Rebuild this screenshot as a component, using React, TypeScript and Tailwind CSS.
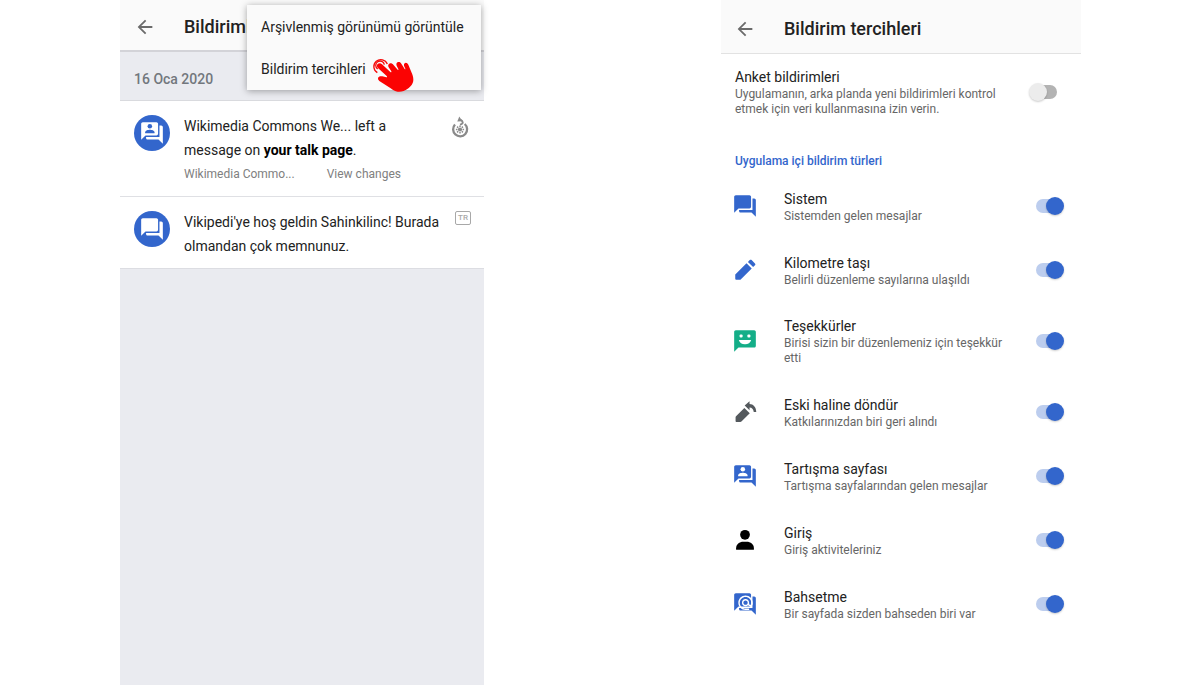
import React, { useState } from "react";
import { MdAlternateEmail, MdArrowBack } from "react-icons/md";

type IconProps = { className?: string };

// Two stacked speech bubbles, children are drawn on the front one
const BubblesIcon: React.FC<IconProps & { children?: React.ReactNode }> = ({ className, children }) => (
    <svg viewBox="0 0 24 24" className={className} fill="currentColor" aria-hidden="true">
        <path d="M3.500 2h12.600c.8 0 1.500.7 1.500 1.500v9.200c0 .8-.7 1.500-1.500 1.500H6L2 18.200V3.500C2 2.700 2.700 2 3.500 2z" />
        <path d="M18.900 5h1.600c.8 0 1.500.7 1.500 1.500V22l-4-4H8c-.8 0-1.500-.7-1.500-1.500v-.9h12.400z" />
        {children}
    </svg>
);

const TalkIcon: React.FC<IconProps & { hole: string }> = ({ className, hole }) => (
    <BubblesIcon className={className}>
        <circle cx="10" cy="5.800" r="2.100" fill={hole} />
        <path d="M5.700 12.200v-.8c0-1.600 2.800-2.300 4.300-2.300s4.300.7 4.300 2.300v.8z" fill={hole} />
    </BubblesIcon>
);

const MentionIcon: React.FC<IconProps> = ({ className }) => (
    <BubblesIcon className={className}>
        <MdAlternateEmail x="4.500" y="2.800" width="10.500" height="10.500" color="#fff" />
    </BubblesIcon>
);

const PencilIcon: React.FC<IconProps> = ({ className }) => (
    <svg viewBox="0 0 24 24" className={className} fill="currentColor" aria-hidden="true">
        <path d="M3 16.200 13.400 5.800l4.800 4.800L7.800 21H3.900a.9.9 0 0 1-.9-.9z" />
        <path d="m14.700 4.500 1.700-1.700c.5-.5 1.200-.5 1.700 0l3.100 3.100c.5.500.5 1.200 0 1.700l-1.700 1.700z" />
    </svg>
);

const ThanksIcon: React.FC<IconProps> = ({ className }) => (
    <svg viewBox="0 0 24 24" className={className} aria-hidden="true">
        <path fill="currentColor" d="M20.500 2h-17C2.700 2 2 2.700 2 3.500V22l4-4h14.500c.8 0 1.500-.7 1.500-1.500v-13c0-.8-.7-1.500-1.500-1.500z" />
        <rect x="7" y="6" width="2.800" height="2.800" rx="1" fill="#fff" />
        <rect x="14.200" y="6" width="2.800" height="2.800" rx="1" fill="#fff" />
        <path fill="#fff" d="M6.300 11h11.400c-.6 2.400-2.800 4-5.700 4s-5.100-1.600-5.700-4z" />
    </svg>
);

const RevertIcon: React.FC<IconProps> = ({ className }) => (
    <svg viewBox="0 0 24 24" className={className} fill="currentColor" aria-hidden="true">
        <path d="M3.700 15.900 11.400 8.200l5 5-7.700 7.600c-.3.300-.6.400-1 .4H4.200c-.5 0-.9-.4-.9-.9v-3.500c0-.3.100-.6.400-.9z" />
        <path d="M11.700 6.100 16.200 2v2.700c3.500.1 6 2.700 6.200 7.300h-2.300c-.4-2.600-1.700-4-3.900-4.100v2.400z" />
    </svg>
);

const LoginIcon: React.FC<IconProps> = ({ className }) => (
    <svg viewBox="0 0 24 24" className={className} fill="currentColor" aria-hidden="true">
        <circle cx="12" cy="7.200" r="4.500" />
        <path d="M3.800 21v-1.500c0-3.600 3-6 6.700-6h3c3.700 0 6.700 2.400 6.700 6V21z" />
    </svg>
);

const CommonsIcon: React.FC<IconProps> = ({ className }) => (
    <svg viewBox="0 0 18 22" className={className} fill="none" stroke="currentColor" aria-hidden="true">
        <path d="M13.700 8A7 7 0 1 1 4 8.500" strokeWidth="2.300" />
        <path d="M9 8.700c3.700-1.200 3.500-3.200.3-5.200" strokeWidth="1.900" />
        <path d="M8.300.400 11.400 5.200 6.300 5.400z" fill="currentColor" stroke="none" />
        <circle cx="9" cy="13.500" r="2.100" fill="currentColor" stroke="none" />
        <path d="M9 9.400v1.500M9 16.100v1.500M4.900 13.500h1.500M11.600 13.500h1.500M6.100 10.600l1.100 1.100M10.800 15.300l1.100 1.100M11.900 10.600l-1.100 1.100M7.200 15.300l-1.100 1.100" strokeWidth="1.500" />
    </svg>
);

const TapHand: React.FC<IconProps> = ({ className }) => (
    <svg viewBox="0 0 126 102" className={className} aria-hidden="true">
        <g fill="none" stroke="#f50a0a" strokeWidth="4">
            <path d="M16 44A21 21 0 1 1 46 18" />
            <path d="M17 33A13 13 0 1 1 37 20" />
        </g>
        <path
            fill="#fb0303"
            d="M17 18c4-4 9-3 13 1l25 23c2 2 4 1 3-2l-8-12c-3-6-1-10 4-12 4-1 7 1 10 4l13 15c2 2 3 0 2-2l-5-10c-2-6 0-9 4-11 5-1 8 1 10 5l10 16c1 2 3 1 2-1l-4-9c-1-5 1-8 5-9 4 0 6 2 8 6l9 22c4 9 6 15 6 23 0 12-8 21-17 27-9 7-18 10-30 9-8-1-14-5-21-10L22 69c-4-3-5-7-3-11 3-4 7-4 12-3l12 3c3 0 3-2 1-4L17 29c-3-4-3-8 0-11z"
        />
    </svg>
);

type Pref = {
    id: string;
    title: string;
    summary: string;
    icon: React.ReactNode;
};

const prefs: Pref[] = [
    { id: "system", title: "Sistem", summary: "Sistemden gelen mesajlar", icon: <BubblesIcon className="size-[26px] text-[#3366cc]" /> },
    { id: "milestone", title: "Kilometre taşı", summary: "Belirli düzenleme sayılarına ulaşıldı", icon: <PencilIcon className="size-[26px] text-[#3366cc]" /> },
    { id: "thanks", title: "Teşekkürler", summary: "Birisi sizin bir düzenlemeniz için teşekkür etti", icon: <ThanksIcon className="size-[26px] text-[#14ae88]" /> },
    { id: "revert", title: "Eski haline döndür", summary: "Katkılarınızdan biri geri alındı", icon: <RevertIcon className="size-[26px] text-[#54595d]" /> },
    { id: "talk", title: "Tartışma sayfası", summary: "Tartışma sayfalarından gelen mesajlar", icon: <TalkIcon className="size-[26px] text-[#3366cc]" hole="#fff" /> },
    { id: "login", title: "Giriş", summary: "Giriş aktiviteleriniz", icon: <LoginIcon className="size-[26px] text-black" /> },
    { id: "mention", title: "Bahsetme", summary: "Bir sayfada sizden bahseden biri var", icon: <MentionIcon className="size-[26px] text-[#3366cc]" /> },
];

const Switch: React.FC<{ id: string; checked: boolean; onChange: () => void }> = ({ id, checked, onChange }) => (
    <input
        id={id}
        type="checkbox"
        role="switch"
        checked={checked}
        onChange={onChange}
        className="relative h-[18px] w-7 shrink-0 cursor-pointer appearance-none before:absolute before:right-0 before:top-0.5 before:h-3.5 before:w-6 before:rounded-full before:bg-[#b3b3b3] after:absolute after:left-0 after:top-0 after:size-[18px] after:rounded-full after:bg-[#ececec] after:shadow-[0_1px_2px_rgba(0,0,0,0.2)] checked:before:left-0 checked:before:bg-[#bccdee] checked:after:left-2.5 checked:after:bg-[#3366cc]"
    />
);

const NotificationsScreen: React.FC = () => (
    <section className="relative min-h-screen w-full max-w-[364px] bg-[#eaebf0]">
        <header className="flex h-[52px] items-center border-b-2 border-[#d3d3d8] bg-[#fafafa] px-3.5 pt-[3px]">
            <button aria-label="Geri" className="w-[50px]">
                <MdArrowBack className="size-[22px] text-[#6b6b6b]" />
            </button>
            <h1 className="text-lg font-medium text-[#222]">Bildirimler</h1>
        </header>

        {/* Overflow menu */}
        <div className="absolute right-[3px] top-[5px] w-[234px] bg-[#fafafa] pt-px shadow-[0_1px_7px_rgba(0,0,0,0.35)]">
            <button className="block h-[42px] w-full whitespace-nowrap px-3.5 text-left text-[14px] text-[#222]">
                Arşivlenmiş görünümü görüntüle
            </button>
            <button className="block h-[42px] w-full px-3.5 text-left text-[14px] text-[#222]">
                Bildirim tercihleri
            </button>
            <TapHand className="absolute left-[125px] top-[53px] h-[34px] w-[42px]" />
        </div>

        <h2 className="border-b border-[#d9dade] px-3.5 pb-3 pt-[18px] text-[14px] font-medium leading-[18px] text-[#72777d]">16 Oca 2020</h2>

        <ul>
            <li className="flex gap-3.5 border-b border-[#dfe0e4] bg-white pb-2.5 pl-3.5 pr-[15px] pt-[13px]">
                <span className="mt-px flex size-9 shrink-0 items-center justify-center rounded-full bg-[#3366cc]">
                    <TalkIcon className="size-[26px] text-white" hole="#3366cc" />
                </span>
                <div className="flex-1 leading-6">
                    <p className="text-[14px] text-[#222]">
                        <span className="block">Wikimedia Commons We... left a</span>
                        <span className="block">
                            message on <b className="font-bold text-black">your talk page</b>.
                        </span>
                    </p>
                    <p className="flex gap-8 text-[12px] leading-6 text-[#808080]">
                        <a href="#commons">Wikimedia Commo...</a>
                        <a href="#changes">View changes</a>
                    </p>
                </div>
                <CommonsIcon className="mt-0.5 h-[22px] w-[18px] text-[#8a8a8a]" />
            </li>
            <li className="flex gap-2 border-b border-[#dcdde2] bg-white pb-2.5 pl-3.5 pr-[13px] pt-[13px]">
                <span className="mr-1.5 mt-px flex size-9 shrink-0 items-center justify-center rounded-full bg-[#3366cc]">
                    <BubblesIcon className="size-[26px] text-white" />
                </span>
                <p className="flex-1 text-[14px] leading-6 text-[#222]">
                    Vikipedi'ye hoş geldin Sahinkilinc! Burada olmandan çok memnunuz.
                </p>
                <span className="mt-px flex h-3.5 w-4 shrink-0 items-center justify-center rounded-xs border border-[#a8a8a8] text-[8px] font-medium text-[#a8a8a8]">
                    TR
                </span>
            </li>
        </ul>
    </section>
);

const PreferencesScreen: React.FC = () => {
    const [pollEnabled, setPollEnabled] = useState(false);
    const [disabled, setDisabled] = useState<string[]>([]);

    const handleToggle = (id: string) => {
        setDisabled((prev) => (prev.includes(id) ? prev.filter((item) => item !== id) : [...prev, id]));
    };

    return (
        <section className="w-full max-w-[360px] bg-white">
            <header className="flex h-[54px] items-center border-b border-[#e2e2e2] bg-[#fafafa] px-[13px] pt-[5px]">
                <button aria-label="Geri" className="w-[50px]">
                    <MdArrowBack className="size-[22px] text-[#6b6b6b]" />
                </button>
                <h1 className="text-lg font-medium text-[#222]">Bildirim tercihleri</h1>
            </header>

            <div className="flex items-center gap-5 pb-3.5 pl-3.5 pr-6 pt-[13px]">
                <label htmlFor="poll" className="flex-1">
                    <span className="block text-[14px] leading-5 text-[#222]">Anket bildirimleri</span>
                    <span className="block text-[12px] leading-[15px] text-[#666]">
                        Uygulamanın, arka planda yeni bildirimleri kontrol etmek için veri kullanmasına izin verin.
                    </span>
                </label>
                <Switch id="poll" checked={pollEnabled} onChange={() => setPollEnabled(!pollEnabled)} />
            </div>

            <h2 className="px-3.5 pb-1 pt-[21px] text-[12px] font-medium leading-[18px] text-[#3366cc]">Uygulama içi bildirim türleri</h2>

            {prefs.map((pref) => (
                <div key={pref.id} className="flex min-h-16 items-center gap-5 py-3.5 pl-[11px] pr-[17px]">
                    {pref.icon}
                    <label htmlFor={pref.id} className="ml-1.5 flex-1">
                        <span className="block text-[14px] leading-5 text-[#222]">{pref.title}</span>
                        <span className="block text-[12px] leading-[15px] text-[#666]">{pref.summary}</span>
                    </label>
                    <Switch id={pref.id} checked={!disabled.includes(pref.id)} onChange={() => handleToggle(pref.id)} />
                </div>
            ))}
        </section>
    );
};

const App: React.FC = () => {
    return (
        <main className="flex min-h-screen justify-between gap-8 bg-white pl-[120px] pr-[119px] font-[Roboto,sans-serif]">
            <NotificationsScreen />
            <PreferencesScreen />
        </main>
    );
};

export default App;
